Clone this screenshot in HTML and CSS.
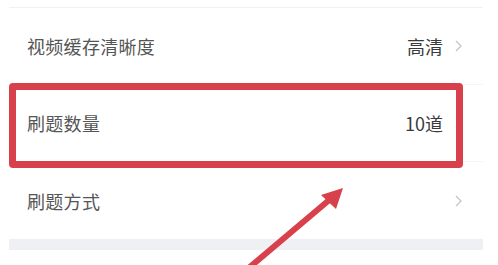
FILE: index.html
```html
<!DOCTYPE html>
<html>
<head>
<meta charset="utf-8">
<link rel="stylesheet" href="styles.css">
</head>
<body>
<div class="page">
  <div class="list">
    <div class="row">
      <span class="label">视频缓存清晰度</span>
      <span class="value">高清</span>
      <svg class="chev" width="7" height="12" viewBox="0 0 7 12"><path d="M1 1 L6 6 L1 11" fill="none" stroke="#c4c4c4" stroke-width="1.3"/></svg>
    </div>
    <div class="row">
      <span class="label">刷题数量</span>
      <span class="value">10道</span>
      <svg class="chev" width="7" height="12" viewBox="0 0 7 12"><path d="M1 1 L6 6 L1 11" fill="none" stroke="#c4c4c4" stroke-width="1.3"/></svg>
    </div>
    <div class="row">
      <span class="label">刷题方式</span>
      <span class="value"></span>
      <svg class="chev" width="7" height="12" viewBox="0 0 7 12"><path d="M1 1 L6 6 L1 11" fill="none" stroke="#c4c4c4" stroke-width="1.3"/></svg>
    </div>
  </div>
  <div class="gap"></div>
  <div class="highlight"></div>
  <svg class="arrow" width="498" height="265" viewBox="0 0 498 265">
    <line x1="244" y1="272" x2="328" y2="201" stroke="#d8404b" stroke-width="6" stroke-linecap="round"/>
    <polygon points="343,188 321,195 336,209" fill="#d8404b"/>
  </svg>
</div>
</body>
</html>
```
FILE: styles.css
```css
html, body {
  margin: 0;
  padding: 0;
  background: #ffffff;
}
body {
  width: 498px;
  height: 265px;
  overflow: hidden;
  font-family: "Noto Sans CJK SC", "Noto Sans", sans-serif;
}
.page {
  position: relative;
  width: 498px;
  height: 265px;
  padding-top: 7px;
  box-sizing: border-box;
}
.list {
  margin: 0 15px 0 9px;
  border-top: 1px solid #f1f1f3;
}
.row {
  height: 77px;
  display: flex;
  align-items: center;
  padding: 0 21px 0 18px;
  border-bottom: 1px solid #f5f5f7;
  box-sizing: border-box;
}
.row:last-child {
  border-bottom: none;
}
.label {
  flex: 1;
  font-size: 18px;
  color: #555555;
  letter-spacing: 0.3px;
}
.value {
  font-size: 18px;
  color: #3a3a3a;
  margin-right: 12px;
}
.chev {
  display: block;
}
.gap {
  margin: 0 15px 0 9px;
  height: 11px;
  background: #eef0f4;
}
.highlight {
  position: absolute;
  left: 9px;
  top: 83px;
  width: 454px;
  height: 85px;
  box-sizing: border-box;
  border: 7px solid #d8404b;
  border-radius: 4px;
}
.arrow {
  position: absolute;
  left: 0;
  top: 0;
}
```
